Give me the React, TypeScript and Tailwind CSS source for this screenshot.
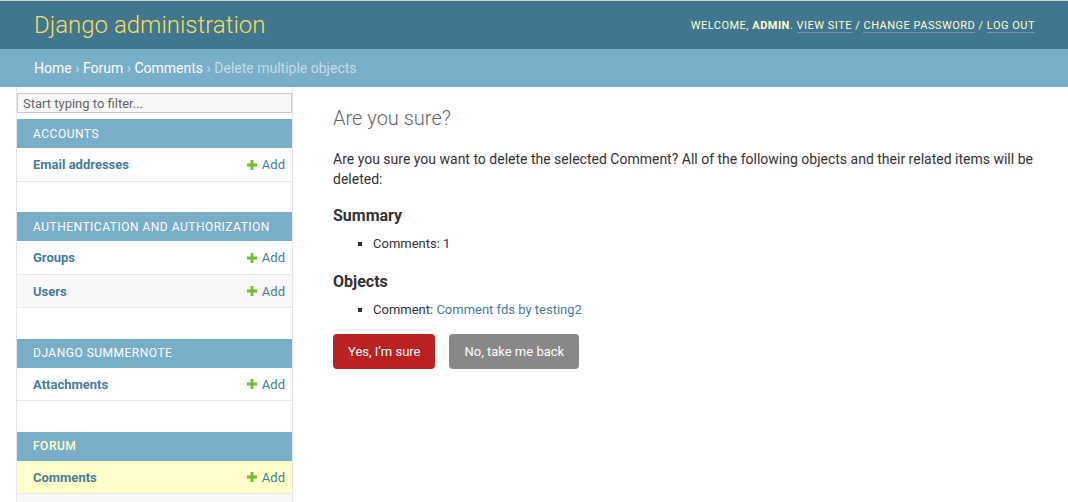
import React from 'react';

type Model = { name: string; striped?: boolean; current?: boolean };
type AppGroup = { label: string; current?: boolean; models: Model[] };

const groups: AppGroup[] = [
  { label: 'Accounts', models: [{ name: 'Email addresses' }] },
  { label: 'Authentication and Authorization', models: [{ name: 'Groups' }, { name: 'Users', striped: true }] },
  { label: 'Django Summernote', models: [{ name: 'Attachments' }] },
  { label: 'Forum', current: true, models: [{ name: 'Comments', current: true }] },
];

const PlusIcon = () => (
  <svg width="10" height="10" viewBox="0 0 10 10" className="mr-[5px]">
    <path d="M3.6 0h2.8v3.6H10v2.8H6.4V10H3.6V6.4H0V3.6h3.6z" fill="#70bf2b" />
  </svg>
);

const Sidebar: React.FC = () => (
  <div className="w-[276px] shrink-0 border-r border-[#e6e6e6] bg-white">
    <input
      className="mt-[6px] block h-[20px] w-[275px] border border-[#ccc] bg-[#f8f8f8] px-[5px] text-[13px] text-[#333] outline-none placeholder:text-[#666]"
      placeholder="Start typing to filter..."
    />
    <div className="mt-[6px]">
      {groups.map((g) => (
        <div key={g.label} className="mb-[30.5px]">
          <div
            className={`flex h-[29px] items-center bg-[#79aec8] pl-[16px] text-[12px] uppercase tracking-[0.5px] ${g.current ? 'font-medium text-[#ffc]' : 'text-white'}`}
          >
            {g.label}
          </div>
          {g.models.map((m) => (
            <div
              key={m.name}
              className={`flex h-[33.5px] items-center justify-between border-b border-[#e8e8e8] pl-[16px] pr-[7px] pt-[1px] text-[13px] ${m.current ? 'bg-[#ffc]' : m.striped ? 'bg-[#f8f8f8]' : 'bg-white'}`}
            >
              <span className="font-bold text-[#447e9b]">{m.name}</span>
              <span className="flex items-center text-[#447e9b]">
                <PlusIcon />
                Add
              </span>
            </div>
          ))}
          {g.current && <div className="h-[33.5px] border-b border-[#e8e8e8] bg-[#f8f8f8]" />}
        </div>
      ))}
    </div>
  </div>
);

export default function App() {
  return (
    <div className="min-h-[502px] bg-white font-['Roboto',sans-serif] text-[#333]">
      <div className="flex h-[49px] items-center justify-between border-t border-[#d5d5d5] bg-[#417690] pl-[34px] pr-[33px]">
        <div className="text-[24px] font-light text-[#f5dd5d]">Django administration</div>
        <div className="pt-[2px] text-[11px] uppercase tracking-[0.5px] text-[#ffc]">
          Welcome, <strong className="font-bold">admin</strong>.{' '}
          <span className="border-b border-white/25">View site</span> /{' '}
          <span className="border-b border-white/25">Change password</span> /{' '}
          <span className="border-b border-white/25">Log out</span>
        </div>
      </div>
      <div className="flex h-[38px] items-center bg-[#79aec8] pl-[34px] text-[14px] text-[#c4dce8]">
        <span className="text-white">Home</span>
        <span className="mx-[3.5px]">›</span>
        <span className="text-white">Forum</span>
        <span className="mx-[3.5px]">›</span>
        <span className="text-white">Comments</span>
        <span className="mx-[3.5px]">›</span>
        <span>Delete multiple objects</span>
      </div>
      <div className="flex">
        <div className="w-[17px] shrink-0 border-r border-[#e6e6e6]" />
        <Sidebar />
        <div className="flex-1 pl-[40px] pr-[30px] pt-[20px]">
          <h1 className="text-[20px] font-light leading-[22px] text-[#666]">Are you sure?</h1>
          <p className="mt-[20px] text-[14px] leading-[20px] text-[#333]">
            Are you sure you want to delete the selected Comment? All of the following objects and their related items will be deleted:
          </p>
          <h2 className="mt-[17px] text-[16px] font-bold leading-[20px] text-[#333]">Summary</h2>
          <ul className="mt-[8px] list-[square] pl-[40px] text-[13px] leading-[20px]">
            <li>Comments: 1</li>
          </ul>
          <h2 className="mt-[18px] text-[16px] font-bold leading-[20px] text-[#333]">Objects</h2>
          <ul className="mt-[8px] list-[square] pl-[40px] text-[13px] leading-[20px]">
            <li>
              Comment: <span className="text-[#447e9b]">Comment fds by testing2</span>
            </li>
          </ul>
          <div className="mt-[14px] flex gap-[14px]">
            <button className="h-[35px] rounded-[4px] bg-[#ba2121] px-[15px] text-[13px] text-white">Yes, I’m sure</button>
            <button className="h-[35px] rounded-[4px] bg-[#888] px-[15px] text-[13px] text-white">No, take me back</button>
          </div>
        </div>
      </div>
    </div>
  );
}
